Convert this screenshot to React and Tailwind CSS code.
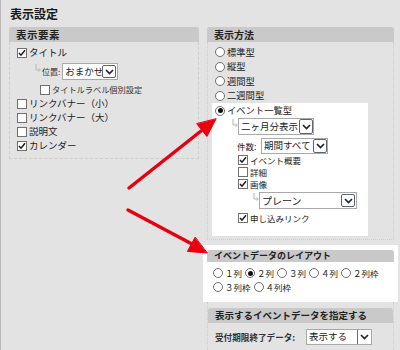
import React from 'react';

function Check({ checked }) {
  return (
    <span className="flex h-[10px] w-[10px] shrink-0 items-center justify-center border border-[#707070] bg-white">
      {checked && (
        <svg width="8" height="8" viewBox="0 0 8 8">
          <path d="M1 4 L3 6.2 L7 1.2" fill="none" stroke="#1a1a1a" strokeWidth="1.5" />
        </svg>
      )}
    </span>
  );
}

function Radio({ checked }) {
  return (
    <span className="flex h-[10px] w-[10px] shrink-0 items-center justify-center rounded-full border border-[#6e6e6e] bg-white">
      {checked && <span className="h-[5px] w-[5px] rounded-full bg-[#111]" />}
    </span>
  );
}

function Corner() {
  return (
    <svg width="6" height="9" viewBox="0 0 6 9" className="shrink-0 self-start mt-[1px]">
      <path d="M1 0 V6 H5" fill="none" stroke="#b4b4b4" strokeWidth="1" />
      <path d="M3.5 4.5 L5.5 6 L3.5 7.5" fill="none" stroke="#b4b4b4" strokeWidth="0.8" />
    </svg>
  );
}

function Select({ value, className, textSize = 'text-[10px]', gap = false }) {
  return (
    <span className={`flex items-stretch border border-[#a9a9a9] bg-white ${className}`}>
      <span className={`flex flex-1 items-center overflow-hidden whitespace-nowrap pl-[2px] leading-none text-[#222] ${textSize}`}>
        {value}
      </span>
      <span
        className={`flex w-[14px] shrink-0 items-center justify-center rounded-[2px] border border-[#5f6470] bg-white ${gap ? 'my-[1px] mr-[1px]' : ''}`}
      >
        <svg width="9" height="6" viewBox="0 0 9 6">
          <path d="M1 1 L4.5 4.6 L8 1" fill="none" stroke="#1d2233" strokeWidth="1.6" />
        </svg>
      </span>
    </span>
  );
}

function Header({ children, className = '' }) {
  return (
    <div className={`flex items-center whitespace-nowrap rounded-t-[3px] bg-[#c9c9c9] pl-[7px] font-bold text-[#222] ${className}`}>
      {children}
    </div>
  );
}

function CheckRow({ checked, label, className = '' }) {
  return (
    <div className={`flex items-center gap-[2px] whitespace-nowrap ${className}`}>
      <Check checked={checked} />
      <span className="leading-none text-[#222]">{label}</span>
    </div>
  );
}

export default function App() {
  const layoutOpts = [
    ['１列', false],
    ['２列', true],
    ['３列', false],
    ['４列', false],
    ['２列枠', false],
  ];

  return (
    <div className="relative h-[350px] w-[400px] overflow-hidden border-l border-[#b9b9b9] bg-[#e3e3e3] font-['Noto_Sans_CJK_JP',sans-serif]">
      {/* page title */}
      <div className="h-[27px] pl-[9px] pt-[8px] text-[12px] font-bold leading-none text-[#1a1a1a]">表示設定</div>

      <div className="flex gap-[4px] pl-[8px]">
        {/* 表示要素 */}
        <div className="w-[190px] self-start">
          <Header className="h-[15px] text-[10.5px] tracking-[0.5px]">表示要素</Header>
          <div className="border border-t-0 border-dashed border-[#cdcdcd] pb-[5px] pl-[7px] pt-[3px] text-[9.5px]">
            <CheckRow checked label="タイトル" className="h-[15px]" />
            <div className="mt-[3px] flex h-[17px] items-center pl-[18px]">
              <Corner />
              <span className="ml-[1px] whitespace-nowrap text-[8px] leading-none text-[#333]">位置:</span>
              <Select value="おまかせ" className="ml-[2px] h-[17px] w-[56px]" textSize="text-[9.5px]" gap />
            </div>
            <div className="mt-[3px] flex h-[13px] items-center gap-[2px] whitespace-nowrap pl-[23px] text-[8.2px]">
              <Check />
              <span className="leading-none text-[#333]">タイトルラベル個別設定</span>
            </div>
            <CheckRow label="リンクバナー（小）" className="mt-[1px] h-[14px]" />
            <CheckRow label="リンクバナー（大）" className="h-[14px]" />
            <CheckRow label="説明文" className="h-[14px]" />
            <CheckRow checked label="カレンダー" className="h-[14px]" />
          </div>
        </div>

        {/* right column */}
        <div className="w-[195px]">
          <div className="mx-[4px]">
            <Header className="h-[15px] text-[10px]">表示方法</Header>
            <div className="border border-t-0 border-dotted border-[#cdcdcd] pb-[3px] pt-[3px] text-[9.3px] text-[#222]">
              {['標準型', '縦型', '週間型', '二週間型'].map((t) => (
                <div key={t} className="flex h-[14.5px] items-center gap-[2px] pl-[7px]">
                  <Radio />
                  <span className="leading-none">{t}</span>
                </div>
              ))}
              <div className="ml-[4px] w-[156px] bg-white pb-[12px] pl-[3px]">
                <div className="flex h-[15px] items-center gap-[2px]">
                  <Radio checked />
                  <span className="leading-none">イベント一覧型</span>
                </div>
                <div className="flex h-[17px] items-center pl-[17px]">
                  <Corner />
                  <Select value="二ヶ月分表示" className="h-[17px] w-[76px]" textSize="text-[9.5px]" />
                </div>
                <div className="mt-[3px] flex h-[16px] items-center pl-[22px]">
                  <span className="w-[24px] whitespace-nowrap text-[8.5px] leading-none">件数:</span>
                  <Select value="期間すべて" className="h-[16px] w-[67px]" textSize="text-[9.5px]" />
                </div>
                <div className="pl-[23px] text-[8.5px]">
                  <CheckRow checked label="イベント概要" className="h-[12px]" />
                  <CheckRow label="詳細" className="h-[12px]" />
                  <CheckRow checked label="画像" className="h-[12px]" />
                  <div className="mt-[2px] flex h-[17px] items-center pl-[15px]">
                    <Corner />
                    <Select value="プレーン" className="h-[17px] w-[98px]" textSize="text-[10px]" gap />
                  </div>
                  <CheckRow checked label="申し込みリンク" className="mt-[3px] h-[12px]" />
                </div>
              </div>
            </div>
          </div>

          {/* イベントデータのレイアウト */}
          <div className="mt-[5px] bg-white pb-[8px] pt-[5px]">
            <Header className="mx-[4px] h-[12px] text-[9px]">イベントデータのレイアウト</Header>
            <div className="mt-[4px] flex h-[14px] items-center pl-[10px] text-[8.5px] text-[#222]">
              {layoutOpts.map(([t, c]) => (
                <span key={t} className="mr-[3px] flex items-center gap-[2px] whitespace-nowrap">
                  <Radio checked={c} />
                  <span className="leading-none">{t}</span>
                </span>
              ))}
            </div>
            <div className="flex h-[14px] items-center pl-[10px] text-[8.5px] text-[#222]">
              {['３列枠', '４列枠'].map((t) => (
                <span key={t} className="mr-[3px] flex items-center gap-[2px] whitespace-nowrap">
                  <Radio />
                  <span className="leading-none">{t}</span>
                </span>
              ))}
            </div>
          </div>

          {/* 表示するイベントデータを指定する */}
          <div className="mx-[4px] h-[60px] border-x border-dotted border-[#cdcdcd] pt-[6px]">
            <Header className="h-[15px] text-[9.5px]">表示するイベントデータを指定する</Header>
            <div className="mt-[6px] flex h-[16px] items-center pl-[7px]">
              <span className="w-[91px] whitespace-nowrap text-[8.6px] font-bold leading-none text-[#333]">受付期限終了データ:</span>
              <span className="flex h-[16px] w-[66px] items-stretch border border-[#a9a9a9] bg-white">
                <span className="flex flex-1 items-center pl-[2px] text-[9.5px] leading-none text-[#222]">表示する</span>
                <span className="flex w-[14px] items-center justify-center border-l border-[#6a6a6a]">
                  <svg width="9" height="6" viewBox="0 0 9 6">
                    <path d="M1 1 L4.5 4.6 L8 1" fill="none" stroke="#1d2233" strokeWidth="1.6" />
                  </svg>
                </span>
              </span>
            </div>
          </div>
        </div>
      </div>

      {/* red annotation arrows */}
      <svg className="pointer-events-none absolute left-0 top-0" width="400" height="350" viewBox="0 0 400 350">
        <g stroke="#e8000f" strokeWidth="3.5" strokeLinecap="round" fill="#e8000f">
          <line x1="128" y1="188" x2="200" y2="131" />
          <path d="M215 119 L205.9 136.5 L195.9 123.9 Z" strokeWidth="1" strokeLinejoin="round" />
          <line x1="127" y1="210" x2="191" y2="244" />
          <path d="M206 253 L186.4 251.4 L194 237.4 Z" strokeWidth="1" strokeLinejoin="round" />
        </g>
      </svg>
    </div>
  );
}
